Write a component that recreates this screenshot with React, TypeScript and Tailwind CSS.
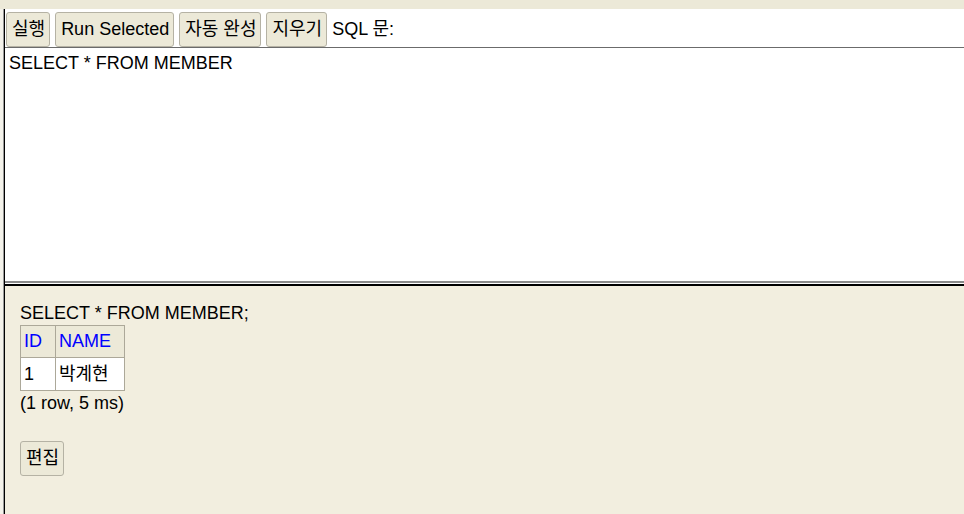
const font = { fontFamily: '"Liberation Sans", Arial, "Noto Sans CJK KR", sans-serif' };

const Ko = ({ children }: { children: string }) => (
  <span className="text-[18px] leading-[21px]">{children}</span>
);

const ToolButton = ({ children }: { children: React.ReactNode }) => (
  <button className="h-[35px] pl-[5px] pr-[4px] border border-[#b5b2a4] rounded-[3px] bg-[#ece9d8] text-black text-[18px] leading-[21px] flex items-center shrink-0">
    {children}
  </button>
);

export default function App() {
  return (
    <div
      className="w-[964px] h-[514px] overflow-hidden bg-[#ece9d8] flex flex-col text-[18px] leading-[21px] text-black"
      style={font}
    >
      <div className="h-[9px] shrink-0" />
      <div className="flex-1 flex min-h-0">
        <div className="w-[3px] bg-[#f4f2ea]" />
        <div className="w-[1px] bg-[#9a9a9a]" />
        <div className="w-[1px] bg-black" />
        <div className="flex-1 flex flex-col min-w-0">
          {/* query frame */}
          <div className="bg-white flex flex-col">
            <div className="flex items-center gap-[5px] pt-[3px] pl-[1px] h-[38px]">
              <ToolButton>
                <Ko>실행</Ko>
              </ToolButton>
              <ToolButton>Run Selected</ToolButton>
              <ToolButton>
                <Ko>자동 완성</Ko>
              </ToolButton>
              <ToolButton>
                <Ko>지우기</Ko>
              </ToolButton>
              <span>
                SQL <Ko>문</Ko>:
              </span>
            </div>
            <textarea
              className="h-[236px] w-full resize-none outline-none bg-white border-t border-t-[#6b6b6b] border-b-2 border-b-[#8a8a8a] pl-[4px] pt-[5px] text-[18px] leading-[21px] text-black"
              style={font}
              defaultValue="SELECT * FROM MEMBER"
            />
            <div className="h-[1px] bg-white" />
          </div>
          {/* result frame */}
          <div className="flex-1 bg-[#f2eedf] border-t-2 border-black pl-[15px] pt-[17px]">
            <div>SELECT * FROM MEMBER;</div>
            <table className="border-collapse mt-[1px]">
              <thead>
                <tr>
                  <th className="bg-[#ece9d8] border border-[#aca899] h-[32px] pl-[3px] pr-[13px] text-left font-normal text-[#0000ff]">
                    ID
                  </th>
                  <th className="bg-[#ece9d8] border border-[#aca899] h-[32px] pl-[3px] pr-[13px] text-left font-normal text-[#0000ff]">
                    NAME
                  </th>
                </tr>
              </thead>
              <tbody>
                <tr>
                  <td className="bg-white border border-[#aca899] h-[33px] pl-[3px] pr-[13px]">1</td>
                  <td className="bg-white border border-[#aca899] h-[33px] pl-[3px] pr-[13px]">
                    <Ko>박계현</Ko>
                  </td>
                </tr>
              </tbody>
            </table>
            <div className="mt-[2px]">(1 row, 5 ms)</div>
            <div className="mt-[27px]">
              <ToolButton>
                <Ko>편집</Ko>
              </ToolButton>
            </div>
          </div>
        </div>
      </div>
    </div>
  );
}
